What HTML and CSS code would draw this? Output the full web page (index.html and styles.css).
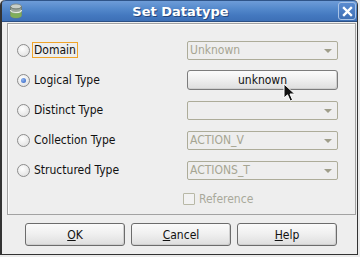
FILE: index.html
```html
<!DOCTYPE html>
<html>
<head>
<meta charset="utf-8">
<title>Set Datatype</title>
<link rel="stylesheet" href="styles.css">
</head>
<body>
<div class="window">
  <div class="titlebar">
    <svg class="app-icon" width="14" height="16" viewBox="0 0 14 16">
      <ellipse cx="7" cy="3.5" rx="5.5" ry="2.5" fill="#c9cfc9" stroke="#7d857d" stroke-width="0.8"/>
      <path d="M1.5 3.5 V12.5 A5.5 2.5 0 0 0 12.5 12.5 V3.5 A5.5 2.5 0 0 1 1.5 3.5 Z" fill="#9aa59a" stroke="#6f786f" stroke-width="0.8"/>
      <path d="M1.5 8 V12.5 A5.5 2.5 0 0 0 12.5 12.5 V8 A5.5 2.5 0 0 1 1.5 8 Z" fill="#7fae5a"/>
      <path d="M1.5 7 A5.5 2.5 0 0 0 12.5 7" fill="none" stroke="#e8efe0" stroke-width="1.2"/>
    </svg>
    <div class="title">Set Datatype</div>
    <div class="close">
      <svg width="11" height="11" viewBox="0 0 11 11"><path d="M2 2 L9 9 M9 2 L2 9" stroke="#fff" stroke-width="2.4" stroke-linecap="square"/></svg>
    </div>
  </div>
  <div class="content">
    <div class="panel">
      <label class="opt"><span class="radio"></span><span class="lbl focus">Domain</span></label>
      <div class="combo"><span>Unknown</span><i class="arrow"></i></div>

      <label class="opt"><span class="radio checked"></span><span class="lbl">Logical Type</span></label>
      <div class="btn wide">unknown</div>

      <label class="opt"><span class="radio"></span><span class="lbl">Distinct Type</span></label>
      <div class="combo"><span></span><i class="arrow"></i></div>

      <label class="opt"><span class="radio"></span><span class="lbl">Collection Type</span></label>
      <div class="combo"><span>ACTION_V</span><i class="arrow"></i></div>

      <label class="opt"><span class="radio"></span><span class="lbl">Structured Type</span></label>
      <div class="combo"><span>ACTIONS_T</span><i class="arrow"></i></div>

      <span></span>
      <label class="check"><span class="box"></span><span>Reference</span></label>
    </div>
    <div class="buttons">
      <div class="btn"><u>O</u>K</div>
      <div class="btn"><u>C</u>ancel</div>
      <div class="btn"><u>H</u>elp</div>
    </div>
  </div>
  <svg class="cursor" width="14" height="20" viewBox="0 0 14 20">
    <path d="M1 1 V15 L4.5 11.8 L7.2 18 L9.6 17 L7 11 H11.8 Z" fill="#111" stroke="#fff" stroke-width="1" stroke-linejoin="round"/>
  </svg>
</div>
</body>
</html>
```
FILE: styles.css
```css
* { box-sizing: border-box; }

body {
  margin: 0;
  width: 360px;
  height: 257px;
  overflow: hidden;
  background: #ebebeb;
  font-family: "DejaVu Sans Condensed", "DejaVu Sans", sans-serif;
  font-stretch: condensed;
  font-size: 12px;
  color: #111;
}

.window {
  position: relative;
  width: 358px;
  height: 255px;
  background: #eeeeee;
  border: 1px solid #333;
  border-left-width: 2px;
  border-top: 0;
  border-radius: 5px 5px 0 0;
  display: flex;
  flex-direction: column;
}

.titlebar {
  position: relative;
  height: 22px;
  border-radius: 4px 4px 0 0;
  background: linear-gradient(#6e9cd8, #5388cb 40%, #4479c0 70%, #3d70b6);
  border-top: 1px solid #2f5488;
  border-bottom: 1px solid #2b4f84;
  display: flex;
  align-items: center;
  justify-content: center;
}

.app-icon {
  position: absolute;
  left: 7px;
  top: 2px;
}

.title {
  color: #fff;
  font-family: "DejaVu Sans", sans-serif;
  font-stretch: normal;
  font-weight: bold;
  font-size: 13px;
  text-shadow: 1px 1px 0 #24467a;
  margin-left: 2px;
}

.close {
  position: absolute;
  right: 1px;
  top: 1px;
  width: 18px;
  height: 18px;
  border: 1px solid #a9c3e6;
  border-radius: 3px;
  background: linear-gradient(#5a8bd0, #3e6fb5);
  display: flex;
  align-items: center;
  justify-content: center;
}

.content {
  flex: 1;
  padding: 1px 1px 0 5px;
}

.panel {
  height: 192px;
  border: 1px solid #a2a2a2;
  box-shadow: inset 1px 1px 0 #fbfbfb;
  padding: 11px 0 0 9px;
  display: grid;
  grid-template-columns: 170px 151px;
  grid-template-rows: 30px 30px 30px 30px 30px 28px;
  align-items: center;
}

.opt {
  display: flex;
  align-items: center;
}

.radio {
  width: 13px;
  height: 13px;
  border-radius: 50%;
  border: 1px solid #8c8c8c;
  background: radial-gradient(circle at 40% 35%, #ffffff, #e6e6e6 70%, #d8d8d8);
  margin-right: 2px;
  display: flex;
  align-items: center;
  justify-content: center;
}

.radio.checked::after {
  content: "";
  width: 5px;
  height: 5px;
  border-radius: 50%;
  background: radial-gradient(circle at 35% 35%, #8fb4ef, #2d5fc0);
}

.lbl {
  border: 1px solid transparent;
  padding: 1px 1px 0 1px;
  line-height: 13px;
}

.lbl.focus {
  border-color: #f0a42a;
}

.combo {
  height: 19px;
  border: 1px solid #adac99;
  border-radius: 2px;
  color: #a6a592;
  padding-left: 2px;
  display: flex;
  align-items: center;
  justify-content: space-between;
}

.arrow {
  width: 0;
  height: 0;
  border-left: 4px solid transparent;
  border-right: 4px solid transparent;
  border-top: 4px solid #9f9e8a;
  margin-right: 5px;
  margin-top: 1px;
}

.btn {
  height: 23px;
  border: 1px solid #6c6c6c;
  border-radius: 3px;
  background: linear-gradient(#fbfbfb, #f0f0f0 45%, #dedede);
  box-shadow: inset -1px -1px 0 #cfcfcf;
  display: flex;
  align-items: center;
  justify-content: center;
  color: #111;
}

.btn.wide {
  height: 20px;
  border-color: #7c7c7c;
}

.check {
  display: flex;
  align-items: center;
  color: #a9a99b;
  margin-left: -4px;
}

.box {
  width: 12px;
  height: 12px;
  border: 1px solid #b8b8a6;
  border-radius: 1px;
  background: #f2f2f2;
  margin-right: 4px;
}

.buttons {
  display: flex;
  gap: 6px;
  padding: 8px 0 0 18px;
}

.buttons .btn {
  width: 100px;
}

.cursor {
  position: absolute;
  left: 281px;
  top: 83px;
}
```
